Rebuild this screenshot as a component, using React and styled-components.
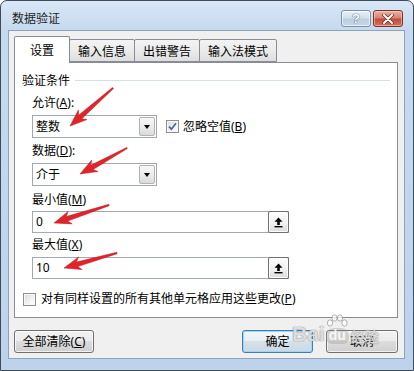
import styled, { createGlobalStyle } from "styled-components";

const GlobalStyle = createGlobalStyle`
  html, body {
    margin: 0;
    padding: 0;
    background: #ffffff;
  }
  * {
    box-sizing: border-box;
  }
`;

// red hand-drawn arrows from the screenshot: tail -> tip
const arrows = [
  { tx: 113, ty: 88, px: 70, py: 126 },
  { tx: 127, ty: 148, px: 80, py: 174 },
  { tx: 109, ty: 205, px: 54, py: 223 },
  { tx: 117, ty: 253, px: 64, py: 268 },
];

function arrowPoints({ tx, ty, px, py }) {
  const dx = px - tx;
  const dy = py - ty;
  const len = Math.hypot(dx, dy);
  const ux = dx / len;
  const uy = dy / len;
  const nx = -uy;
  const ny = ux;
  const head = 17;
  const hw = 6.5;
  const sw = 2.4;
  const tw = 0.7;
  const bx = px - ux * head;
  const by = py - uy * head;
  const jx = px - ux * head * 0.8;
  const jy = py - uy * head * 0.8;
  const pts = [
    [tx + nx * tw, ty + ny * tw],
    [jx + nx * sw, jy + ny * sw],
    [bx + nx * hw, by + ny * hw],
    [px, py],
    [bx - nx * hw, by - ny * hw],
    [jx - nx * sw, jy - ny * sw],
    [tx - nx * tw, ty - ny * tw],
  ];
  return pts.map((p) => p[0].toFixed(1) + "," + p[1].toFixed(1)).join(" ");
}

function App() {
  return (
    <>
      <GlobalStyle />
      <Window>
        <TitleBar>
          <Title>数据验证</Title>
          <Caps>
            <HelpBtn>?</HelpBtn>
            <CloseBtn>
              <svg width="12" height="10" viewBox="0 0 12 10">
                <path d="M2 1 L10 9 M10 1 L2 9" stroke="#5a2a22" strokeWidth="3.4" strokeLinecap="round" />
                <path d="M2 1 L10 9 M10 1 L2 9" stroke="#ffffff" strokeWidth="2" strokeLinecap="round" />
              </svg>
            </CloseBtn>
          </Caps>
        </TitleBar>

        <Client>
          <TabRow>
            <Tab $active>设置</Tab>
            <Tab>输入信息</Tab>
            <Tab>出错警告</Tab>
            <Tab>输入法模式</Tab>
          </TabRow>

          <Panel>
            <GroupHeader>
              <span>验证条件</span>
              <GroupLine />
            </GroupHeader>

            <Fields>
              <Label $mt={7}>允许(<u>A</u>):</Label>
              <ComboRow>
                <Combo>
                  <ComboText>整数</ComboText>
                  <DropBtn><DropArrow /></DropBtn>
                </Combo>
                <CheckLabel>
                  <CheckBox>
                    <svg width="9" height="9" viewBox="0 0 9 9">
                      <path d="M1 4.6 L3.4 7.2 L8 1.2" fill="none" stroke="#4a64a0" strokeWidth="1.7" />
                    </svg>
                  </CheckBox>
                  <span>忽略空值(<u>B</u>)</span>
                </CheckLabel>
              </ComboRow>

              <Label $mt={5}>数据(<u>D</u>):</Label>
              <ComboRow>
                <Combo>
                  <ComboText>介于</ComboText>
                  <DropBtn><DropArrow /></DropBtn>
                </Combo>
              </ComboRow>

              <Label $mt={6}>最小值(<u>M</u>)</Label>
              <RefInput $mt={3}>
                <InputText>0</InputText>
                <RefBtn><UpIcon /></RefBtn>
              </RefInput>

              <Label $mt={4}>最大值(<u>X</u>)</Label>
              <RefInput $mt={4}>
                <InputText>10</InputText>
                <RefBtn><UpIcon /></RefBtn>
              </RefInput>
            </Fields>

            <ApplyRow>
              <CheckBox />
              <span>对有同样设置的所有其他单元格应用这些更改(<u>P</u>)</span>
            </ApplyRow>
          </Panel>

          <Footer>
            <Button $w={80}>全部清除(<u>C</u>)</Button>
            <Spacer />
            <Button $w={71} $default>确定</Button>
            <Button $w={72}>取消</Button>
          </Footer>
        </Client>

        <ArrowLayer width="414" height="371" viewBox="0 0 414 371">
          {arrows.map((a, i) => (
            <polygon key={i} points={arrowPoints(a)} fill="#e1242a" stroke="#b8171c" strokeWidth="0.5" strokeLinejoin="round" />
          ))}
        </ArrowLayer>

        <Watermark>
          <WmText>Bai</WmText>
          <Paw>
            <svg width="22" height="14" viewBox="0 0 22 14">
              <ellipse cx="4" cy="9" rx="2.6" ry="3.2" />
              <ellipse cx="8.5" cy="4" rx="2.6" ry="3.2" />
              <ellipse cx="14" cy="4" rx="2.6" ry="3.2" />
              <ellipse cx="18.5" cy="9" rx="2.6" ry="3.2" />
            </svg>
            <WmDu>du</WmDu>
          </Paw>
          <WmText $small>经验</WmText>
        </Watermark>
      </Window>
    </>
  );
}

function UpIcon() {
  return (
    <svg width="9" height="11" viewBox="0 0 9 11">
      <path d="M4.5 0.5 L8.5 4.8 L5.8 4.8 L5.8 8 L3.2 8 L3.2 4.8 L0.5 4.8 Z" fill="#000" />
      <rect x="0.5" y="9" width="8" height="1.4" fill="#000" />
    </svg>
  );
}

const Window = styled.div`
  position: relative;
  width: 414px;
  height: 371px;
  border: 1px solid #3f4b59;
  border-radius: 7px 7px 0 0;
  background: linear-gradient(180deg, #d9e7f6 0px, #c6daef 28px, #bdd3eb 100%);
  padding: 0 8px 11px 7px;
  display: flex;
  flex-direction: column;
  font-family: "Noto Sans", "Noto Sans CJK SC", sans-serif;
  font-size: 12px;
  color: #000;
  overflow: hidden;
`;

const TitleBar = styled.div`
  height: 29px;
  display: flex;
  justify-content: space-between;
  align-items: flex-start;
`;

const Title = styled.div`
  margin-top: 9px;
  padding-left: 4px;
  line-height: 16px;
  font-family: "Noto Sans CJK SC", sans-serif;
  color: #1e1e1e;
`;

const Caps = styled.div`
  margin-top: 9px;
  margin-right: 2px;
  display: flex;
  gap: 2px;
`;

const CapBtn = styled.div`
  width: 30px;
  height: 17px;
  border-radius: 3px;
  display: flex;
  align-items: center;
  justify-content: center;
`;

const HelpBtn = styled(CapBtn)`
  border: 1px solid #7d90a8;
  background: linear-gradient(180deg, #e9f0f8 0%, #d3dfed 45%, #bccde2 55%, #c9d8ea 100%);
  box-shadow: inset 0 0 0 1px rgba(255, 255, 255, 0.6);
  color: #ffffff;
  font-family: "Liberation Sans", sans-serif;
  font-weight: bold;
  font-size: 13px;
  text-shadow: 0 0 1px #3d4f66, 0 0 1px #3d4f66;
`;

const CloseBtn = styled(CapBtn)`
  border: 1px solid #7a3328;
  background: linear-gradient(180deg, #eab1a5 0%, #d98472 45%, #c44a35 55%, #d6735c 100%);
  box-shadow: inset 0 0 0 1px rgba(255, 220, 210, 0.5);
`;

const Client = styled.div`
  flex: 1;
  background: #f0f0f0;
  border: 1px solid #8ea2bc;
  padding: 5px 6px 5px 5px;
  display: flex;
  flex-direction: column;
`;

const TabRow = styled.div`
  height: 26px;
  display: flex;
  align-items: flex-end;
`;

const Tab = styled.div`
  position: relative;
  z-index: ${(p) => (p.$active ? 2 : 1)};
  height: ${(p) => (p.$active ? "27px" : "23px")};
  margin-bottom: ${(p) => (p.$active ? "-1px" : "0")};
  margin-left: ${(p) => (p.$active ? "0" : "-1px")};
  padding: ${(p) => (p.$active ? "0 15px" : "0 8px")};
  border: 1px solid #898c95;
  border-bottom: ${(p) => (p.$active ? "none" : "1px solid #898c95")};
  border-radius: 2px 2px 0 0;
  background: ${(p) =>
    p.$active ? "#ffffff" : "linear-gradient(180deg, #f3f3f3 0%, #ebebeb 50%, #dedede 100%)"};
  display: flex;
  align-items: center;
  padding-top: ${(p) => (p.$active ? "0" : "1px")};
  line-height: 16px;
  font-family: "Noto Sans CJK SC", sans-serif;
  white-space: nowrap;
  &:first-child {
    margin-left: 0;
  }
`;

const Panel = styled.div`
  height: 256px;
  background: #ffffff;
  border: 1px solid #898c95;
  padding: 9px 7px 0 7px;
`;

const GroupHeader = styled.div`
  display: flex;
  align-items: center;
  gap: 5px;
  line-height: 16px;
  font-family: "Noto Sans CJK SC", sans-serif;
`;

const GroupLine = styled.div`
  flex: 1;
  height: 1px;
  margin-top: 1px;
  background: #d5dfe5;
`;

const Fields = styled.div`
  margin-left: 10px;
  display: flex;
  flex-direction: column;
  align-items: flex-start;
`;

const Label = styled.div`
  margin-top: ${(p) => p.$mt}px;
  line-height: 16px;
  margin-bottom: 4px;
  u {
    text-underline-offset: 1px;
  }
`;

const ComboRow = styled.div`
  display: flex;
  align-items: center;
  gap: 9px;
`;

const Combo = styled.div`
  width: 125px;
  height: 23px;
  border: 1px solid #a3a9b1;
  background: #ffffff;
  display: flex;
  align-items: stretch;
`;

const ComboText = styled.div`
  flex: 1;
  padding-left: 3px;
  display: flex;
  align-items: center;
  line-height: 16px;
`;

const DropBtn = styled.div`
  width: 16px;
  margin: 1px;
  border: 1px solid #b3b3b3;
  border-radius: 2px;
  background: linear-gradient(180deg, #f8f8f8 0%, #ececec 50%, #dadada 100%);
  display: flex;
  align-items: center;
  justify-content: center;
`;

const DropArrow = styled.div`
  width: 0;
  height: 0;
  border-left: 3.5px solid transparent;
  border-right: 3.5px solid transparent;
  border-top: 4px solid #000;
`;

const CheckLabel = styled.div`
  display: flex;
  align-items: center;
  gap: 4px;
  line-height: 16px;
`;

const CheckBox = styled.div`
  width: 13px;
  height: 13px;
  border: 1px solid #8f8f8f;
  background: linear-gradient(135deg, #d8d8d8 0%, #f4f4f4 60%, #ffffff 100%);
  box-shadow: inset 0 0 0 1px #f7f7f7;
  display: flex;
  align-items: center;
  justify-content: center;
`;

const RefInput = styled.div`
  margin-top: ${(p) => p.$mt - 4}px;
  width: 257px;
  height: 22px;
  border: 1px solid #a3a9b1;
  background: #ffffff;
  display: flex;
  align-items: stretch;
`;

const InputText = styled.div`
  flex: 1;
  padding-left: 3px;
  display: flex;
  align-items: center;
  line-height: 16px;
`;

const RefBtn = styled.div`
  width: 21px;
  margin: -1px -1px -1px 0;
  border: 1px solid #707070;
  border-radius: 2px;
  background: linear-gradient(180deg, #fdfdfd 0%, #f1f1f1 55%, #dcdcdc 100%);
  box-shadow: inset 0 0 0 1px #ffffff;
  display: flex;
  align-items: center;
  justify-content: center;
`;

const ApplyRow = styled.div`
  margin-top: 12px;
  margin-left: 1px;
  display: flex;
  align-items: center;
  gap: 5px;
  line-height: 16px;
`;

const Footer = styled.div`
  margin-top: 12px;
  display: flex;
  align-items: center;
  gap: 13px;
`;

const Spacer = styled.div`
  flex: 1;
`;

const Button = styled.div`
  width: ${(p) => p.$w}px;
  height: 23px;
  border: 1px solid ${(p) => (p.$default ? "#3c7fb1" : "#707070")};
  border-radius: 3px;
  background: ${(p) =>
    p.$default
      ? "linear-gradient(180deg, #f2f7fb 0%, #e6eef5 50%, #d6e1ea 50%, #cbd8e3 100%)"
      : "linear-gradient(180deg, #f2f2f2 0%, #ebebeb 50%, #dddddd 50%, #cfcfcf 100%)"};
  box-shadow: inset 0 0 0 1px ${(p) => (p.$default ? "#9fd5f2" : "rgba(255, 255, 255, 0.7)")};
  display: flex;
  align-items: center;
  justify-content: center;
  line-height: 16px;
  white-space: nowrap;
`;

const ArrowLayer = styled.svg`
  position: absolute;
  left: -1px;
  top: -1px;
  pointer-events: none;
`;

const Watermark = styled.div`
  position: absolute;
  left: 291px;
  top: 313px;
  display: flex;
  align-items: flex-end;
  pointer-events: none;
`;

const WmText = styled.span`
  font-family: ${(p) => (p.$small ? '"Noto Sans CJK SC", sans-serif' : '"Liberation Sans", sans-serif')};
  font-size: ${(p) => (p.$small ? "14px" : "21px")};
  font-weight: bold;
  line-height: ${(p) => (p.$small ? "22px" : "26px")};
  color: rgba(255, 255, 255, 0.75);
  text-shadow: 0 0 1px rgba(110, 110, 110, 0.75), 0 0 1px rgba(110, 110, 110, 0.75);
  margin-left: ${(p) => (p.$small ? "2px" : "0")};
`;

const Paw = styled.div`
  margin-left: 1px;
  display: flex;
  flex-direction: column;
  align-items: center;
  svg {
    fill: rgba(255, 255, 255, 0.7);
    stroke: rgba(120, 120, 120, 0.7);
    stroke-width: 0.8;
  }
`;

const WmDu = styled.span`
  font-family: "Liberation Sans", sans-serif;
  font-size: 14px;
  font-weight: bold;
  line-height: 15px;
  padding: 0 3px 1px;
  border-radius: 8px 8px 6px 6px;
  color: rgba(255, 255, 255, 0.85);
  background: rgba(150, 150, 150, 0.35);
  margin-bottom: 3px;
`;

export default App;
